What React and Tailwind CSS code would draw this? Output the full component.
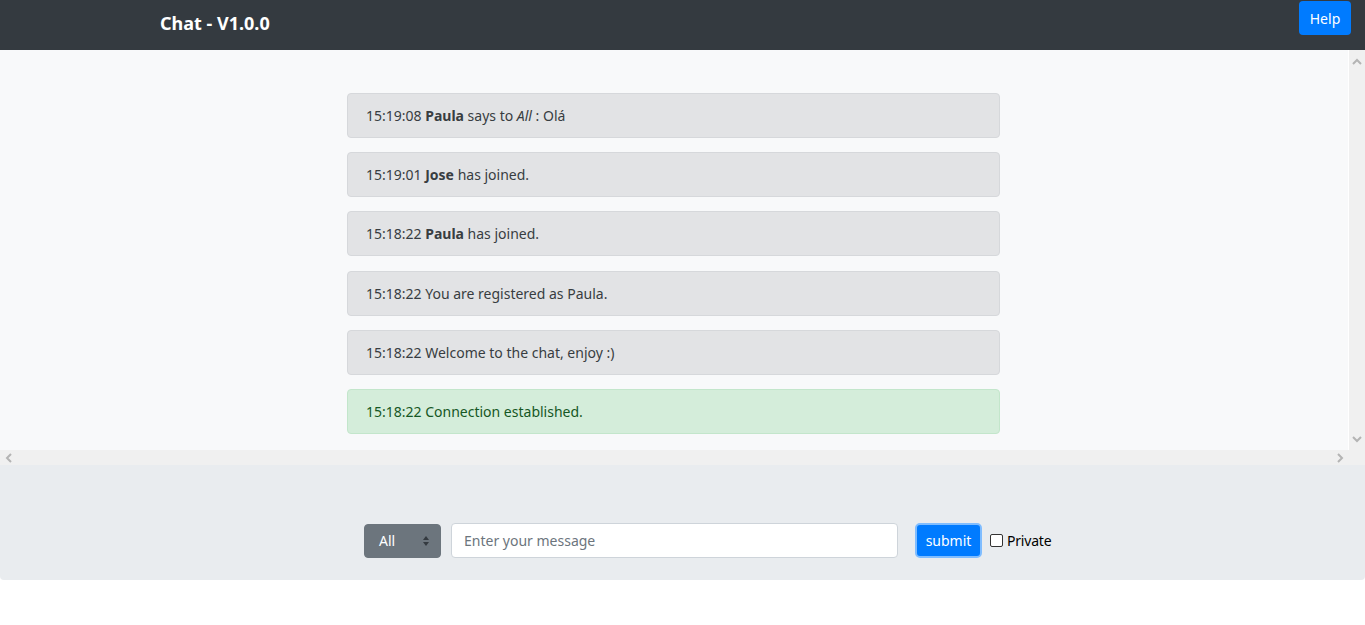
import React from "react";

const messages = [
  { time: "15:19:08", who: "Paula", text: "says to", to: "All", msg: "Olá" },
  { time: "15:19:01", who: "Jose", text: "has joined." },
  { time: "15:18:22", who: "Paula", text: "has joined." },
  { time: "15:18:22", text: "You are registered as Paula." },
  { time: "15:18:22", text: "Welcome to the chat, enjoy :)" },
  { time: "15:18:22", text: "Connection established.", ok: true },
];

function Message({ m }) {
  return (
    <div
      className={
        "h-[45px] flex items-center pl-[18px] rounded border text-[14px] " +
        (m.ok
          ? "bg-[#d4edda] border-[#c3e6cb] text-[#155724]"
          : "bg-[#e2e3e5] border-[#d6d8db] text-[#383d41]")
      }
    >
      <span>
        {m.time} {m.who && <b className="font-bold">{m.who}</b>} {m.text}
        {m.to && (
          <>
            {" "}
            <i>{m.to}</i> : {m.msg}
          </>
        )}
      </span>
    </div>
  );
}

// chevron arrow for the fake scrollbars
function Arrow({ dir }) {
  const pts = {
    up: "1,6 5,2 9,6",
    down: "1,2 5,6 9,2",
    left: "6,1 2,5 6,9",
    right: "2,1 6,5 2,9",
  }[dir];
  const vert = dir === "up" || dir === "down";
  return (
    <svg width={vert ? 10 : 8} height={vert ? 8 : 10} viewBox={vert ? "0 0 10 8" : "0 0 8 10"}>
      <polyline points={pts} fill="none" stroke="#b4b4b4" strokeWidth="2" />
    </svg>
  );
}

export default function App() {
  return (
    <div className="w-[1365px] bg-white" style={{ fontFamily: '"Noto Sans", "Open Sans", sans-serif' }}>
      {/* navbar */}
      <header className="h-[50px] bg-[#343a40] flex items-start justify-between">
        <div className="pl-[160px] pt-[10px] text-white font-bold text-[18px] leading-[26px]">
          Chat - V1.0.0
        </div>
        <button className="mt-[1px] mr-[14px] w-[52px] h-[34px] rounded bg-[#007bff] text-white text-[14px]">
          Help
        </button>
      </header>

      {/* messages + scrollbars */}
      <div className="flex h-[415px]">
        <div className="flex-1 flex flex-col">
          <div className="h-[400px] overflow-hidden bg-[#f8f9fa] border-r border-white">
            <div className="pt-[43px]">
              <div className="ml-[347px] w-[653px] flex flex-col gap-[14.2px]">
                {messages.map((m, i) => (
                  <Message key={i} m={m} />
                ))}
              </div>
            </div>
          </div>
          <div className="h-[15px] bg-[#f0f0f0] flex items-center justify-between px-[5px]">
            <Arrow dir="left" />
            <Arrow dir="right" />
          </div>
        </div>
        <div className="w-[16px] bg-[#f0f0f0] flex flex-col items-center justify-between pt-[8px] pb-[22px]">
          <Arrow dir="up" />
          <Arrow dir="down" />
        </div>
      </div>

      {/* footer form */}
      <div className="h-[115px] bg-[#e9ecef] rounded-b flex items-end pb-[22px] pl-[364px]">
        <div className="flex items-center">
          <div className="w-[77px] h-[34px] bg-[#6c757d] border border-[#6c757d] rounded flex items-center justify-between pl-[14px] pr-[10px] text-white text-[14px]">
            <span>All</span>
            <svg width="8" height="12" viewBox="0 0 8 12">
              <path d="M4 1 L7 5 H1 Z M4 11 L1 7 H7 Z" fill="#343a40" />
            </svg>
          </div>
          <div className="ml-[10px] w-[447px] h-[35px] bg-white border border-[#ced4da] rounded flex items-center pl-[12px] text-[14px] text-[#6c757d]">
            Enter your message
          </div>
          <button className="ml-[17px] w-[67px] h-[35px] rounded-[5px] bg-[#007bff] border-2 border-[#80bdff] text-white text-[14px]">
            submit
          </button>
          <label className="ml-[8px] flex items-center text-[14px] text-black">
            <span className="w-[13px] h-[13px] border border-[#333] bg-white rounded-[2px]" />
            <span className="ml-[4px] tracking-[-0.2px]">Private</span>
          </label>
        </div>
      </div>
    </div>
  );
}
